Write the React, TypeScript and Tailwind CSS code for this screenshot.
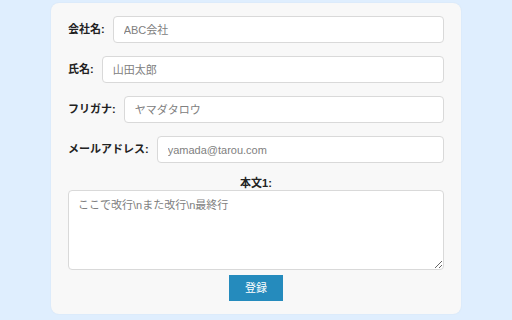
import React from "react";

const fields = [
  { label: "会社名:", placeholder: "ABC会社" },
  { label: "氏名:", placeholder: "山田太郎" },
  { label: "フリガナ:", placeholder: "ヤマダタロウ" },
  { label: "メールアドレス:", placeholder: "yamada@tarou.com" },
];

export default function App() {
  return (
    <div
      className="min-h-screen bg-[#dfeefe] pt-[3px]"
      style={{ fontFamily: '"Liberation Sans", "Noto Sans CJK JP", sans-serif' }}
    >
      <div className="mx-auto w-[410px] rounded-lg bg-[#f8f8f8] px-[17px] pt-[13px] pb-[13px] shadow-[0_0_2px_rgba(0,0,0,0.06)]">
        <div className="flex flex-col gap-[13px]">
          {fields.map((f) => (
            <div key={f.label} className="flex items-center gap-[8px]">
              <label className="whitespace-nowrap text-[11px] font-bold text-[#222]">{f.label}</label>
              <input
                className="h-[27px] flex-1 rounded-[4px] border border-[#d9d9d9] bg-white px-[10px] text-[11px] text-[#333] outline-none placeholder:text-[#808080]"
                placeholder={f.placeholder}
              />
            </div>
          ))}
        </div>

        <div className="mt-[14px] text-center text-[11px] leading-[12px] font-bold text-[#222]">本文1:</div>
        <textarea
          className="mt-[1px] block h-[80px] w-full rounded-[4px] border border-[#d9d9d9] bg-white px-[9px] py-[6px] text-[11px] outline-none placeholder:text-[#808080]"
          placeholder={"ここで改行\\nまた改行\\n最終行"}
        />
        <div className="mt-[5px] flex justify-center">
          <button className="h-[26px] w-[54px] bg-[#258bbd] text-[11px] text-white">登録</button>
        </div>
      </div>
    </div>
  );
}
